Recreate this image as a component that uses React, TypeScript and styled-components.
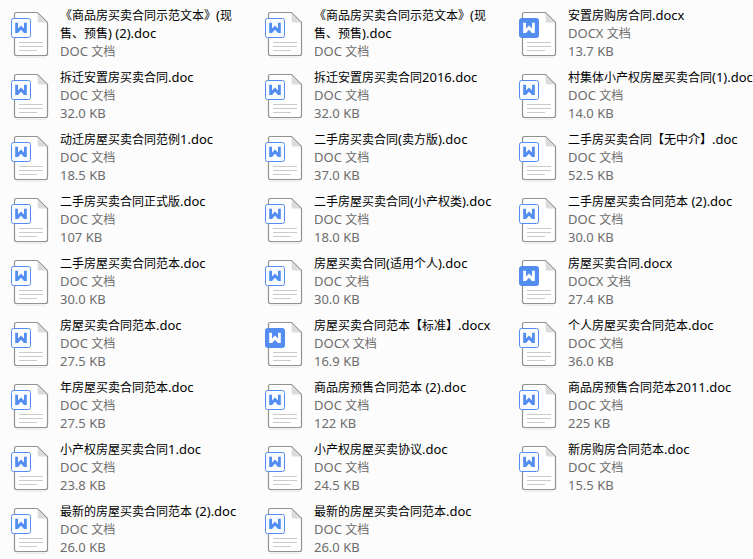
import React from "react";
import styled, { createGlobalStyle } from "styled-components";

const GlobalStyle = createGlobalStyle`
  * { box-sizing: border-box; }
  body {
    margin: 0;
    background: #fcfcfc;
    color: #000;
    font-family: "Noto Sans", "Noto Sans CJK SC", sans-serif;
  }
`;

const FileGrid = styled.ul`
  display: grid;
  grid-template-columns: repeat(3, minmax(0, 1fr));
  grid-auto-rows: 62px;
  column-gap: 20px;
  margin: 0;
  padding: 7px 0 0 11px;
  list-style: none;
  overflow: hidden;
`;

const FileItem = styled.li`
  display: flex;
  align-items: flex-start;
  gap: 9px;
`;

const FileIcon = styled.svg`
  flex: none;
  width: 40px;
  height: 48px;
  margin-top: 4px;
`;

const FileText = styled.div`
  flex: 1;
  min-width: 0;
  margin-right: -8px;
`;

const FileName = styled.div`
  font-size: 12px;
  line-height: 18px;
`;

const FileDetail = styled.div`
  color: #6d6d6d;
  font-size: 12px;
  line-height: 18px;
  white-space: nowrap;
`;

const Latin = styled.span`
  font-size: 13px;
  line-height: 1;
`;

interface FileEntry {
  name: string;
  size?: string;
}

const files: FileEntry[] = [
  { name: "《商品房买卖合同示范文本》(现售、预售) (2).doc" },
  { name: "《商品房买卖合同示范文本》(现售、预售).doc" },
  { name: "安置房购房合同.docx", size: "13.7 KB" },
  { name: "拆迁安置房买卖合同.doc", size: "32.0 KB" },
  { name: "拆迁安置房买卖合同2016.doc", size: "32.0 KB" },
  { name: "村集体小产权房屋买卖合同(1).doc", size: "14.0 KB" },
  { name: "动迁房屋买卖合同范例1.doc", size: "18.5 KB" },
  { name: "二手房买卖合同(卖方版).doc", size: "37.0 KB" },
  { name: "二手房买卖合同【无中介】.doc", size: "52.5 KB" },
  { name: "二手房买卖合同正式版.doc", size: "107 KB" },
  { name: "二手房屋买卖合同(小产权类).doc", size: "18.0 KB" },
  { name: "二手房屋买卖合同范本 (2).doc", size: "30.0 KB" },
  { name: "二手房屋买卖合同范本.doc", size: "30.0 KB" },
  { name: "房屋买卖合同(适用个人).doc", size: "30.0 KB" },
  { name: "房屋买卖合同.docx", size: "27.4 KB" },
  { name: "房屋买卖合同范本.doc", size: "27.5 KB" },
  { name: "房屋买卖合同范本【标准】.docx", size: "16.9 KB" },
  { name: "个人房屋买卖合同范本.doc", size: "36.0 KB" },
  { name: "年房屋买卖合同范本.doc", size: "27.5 KB" },
  { name: "商品房预售合同范本 (2).doc", size: "122 KB" },
  { name: "商品房预售合同范本2011.doc", size: "225 KB" },
  { name: "小产权房屋买卖合同1.doc", size: "23.8 KB" },
  { name: "小产权房屋买卖协议.doc", size: "24.5 KB" },
  { name: "新房购房合同范本.doc", size: "15.5 KB" },
  { name: "最新的房屋买卖合同范本 (2).doc", size: "26.0 KB" },
  { name: "最新的房屋买卖合同范本.doc", size: "26.0 KB" },
];

/* Latin runs are set one pixel larger than the Chinese text around them. */
function MixedText({ text }: { text: string }) {
  const runs = text.match(/[\x20-\x7e]+|[^\x20-\x7e]+/g) ?? [];
  return (
    <>
      {runs.map((run, i) =>
        /^[\x20-\x7e]/.test(run) ? <Latin key={i}>{run}</Latin> : run
      )}
    </>
  );
}

function WordIcon({ filled }: { filled: boolean }) {
  return (
    <FileIcon viewBox="0 0 40 48" aria-hidden="true">
      <path d="M5 46.2H35" stroke="#ececec" strokeWidth="1.5" />
      <path
        d="M5.5 1.5H26.5L36.5 11.5V42.5Q36.5 44.5 34.5 44.5H5.5Q3.5 44.5 3.5 42.5V3.5Q3.5 1.5 5.5 1.5Z"
        fill="#fff"
        stroke="#929292"
        strokeWidth="1.2"
      />
      <path d="M26.7 2.3L35.8 11.5H28.2Q26.7 11.5 26.7 10Z" fill="#dcdcdc" />
      <path
        d="M8 31.5H32M8 35.5H32M8 39.5H26"
        stroke="#cbcbcb"
        strokeWidth="1"
      />
      <rect
        x="0.5"
        y="7.5"
        width="19"
        height="19"
        rx="2"
        fill={filled ? "#548df2" : "#fafcff"}
        stroke="#548df2"
      />
      <path
        d="M4.2 11.8H7V17.6L10 14.6L13 17.6V11.8H15.8V22H13L10 18.8L7 22H4.2Z"
        fill={filled ? "#fff" : "#548df2"}
      />
    </FileIcon>
  );
}

export default function App() {
  return (
    <>
      <GlobalStyle />
      <FileGrid>
        {files.map(({ name, size }) => {
          const isDocx = name.endsWith(".docx");
          return (
            <FileItem key={name}>
              <WordIcon filled={isDocx} />
              <FileText>
                <FileName>
                  <MixedText text={name} />
                </FileName>
                <FileDetail>
                  <MixedText text={isDocx ? "DOCX 文档" : "DOC 文档"} />
                </FileDetail>
                {size && (
                  <FileDetail>
                    <MixedText text={size} />
                  </FileDetail>
                )}
              </FileText>
            </FileItem>
          );
        })}
      </FileGrid>
    </>
  );
}
